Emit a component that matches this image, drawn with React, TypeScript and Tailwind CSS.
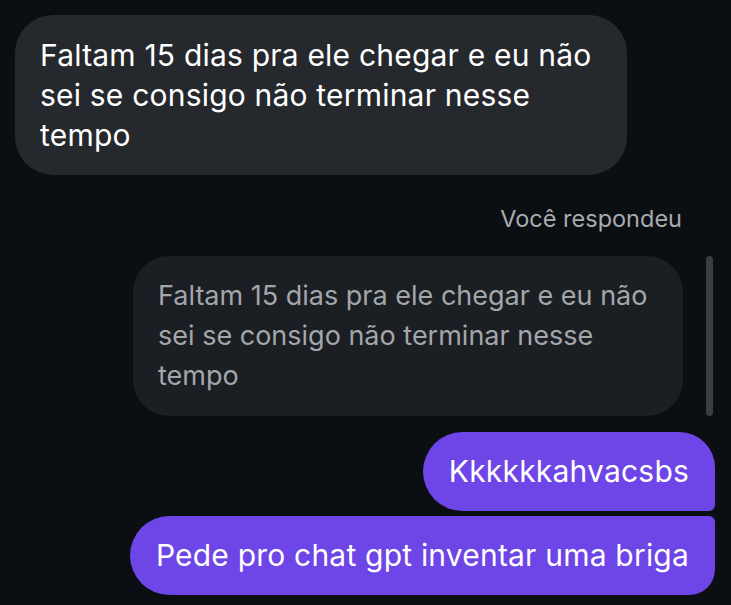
export default function App() {
  return (
    <div
      className="flex h-[605px] w-[731px] flex-col overflow-hidden bg-[#0b0e12] text-white"
      style={{ fontFamily: 'Inter, "Noto Sans", sans-serif' }}
    >
      <div className="pl-[15px] pt-[15px]">
        <div className="w-[612px] rounded-[38px] bg-[#25282d] px-[25px] py-[20px] text-[30px] leading-[40px] tracking-[0.2px]">
          Faltam 15 dias pra ele chegar e eu não sei se consigo não terminar nesse tempo
        </div>
      </div>

      <div className="mt-[30px] pr-[49px] text-right text-[23.5px] leading-[28px] text-[#a9abae]">
        Você respondeu
      </div>

      <div className="mt-[23px] flex items-stretch justify-end pr-[18px]">
        <div className="w-[550px] rounded-[36px] bg-[#1b1e23] px-[25px] py-[20px] text-[27px] leading-[40px] text-[#a3a6ab]">
          Faltam 15 dias pra ele chegar e eu não sei se consigo não terminar nesse tempo
        </div>
        <div className="ml-[23px] w-[7px] rounded-full bg-[#3a3e45]" />
      </div>

      <div className="mt-[16px] flex flex-col items-end gap-[5px] pr-[16px]">
        <div className="flex h-[79px] items-center rounded-l-[40px] rounded-tr-[36px] rounded-br-[6px] bg-[#6e45e7] px-[26px] text-[30px] tracking-[0.2px]">
          Kkkkkkahvacsbs
        </div>
        <div className="flex h-[79px] items-center rounded-l-[40px] rounded-tr-[6px] rounded-br-[26px] bg-[#6e45e7] px-[26px] text-[30px] tracking-[0.2px]">
          Pede pro chat gpt inventar uma briga
        </div>
      </div>
    </div>
  );
}
